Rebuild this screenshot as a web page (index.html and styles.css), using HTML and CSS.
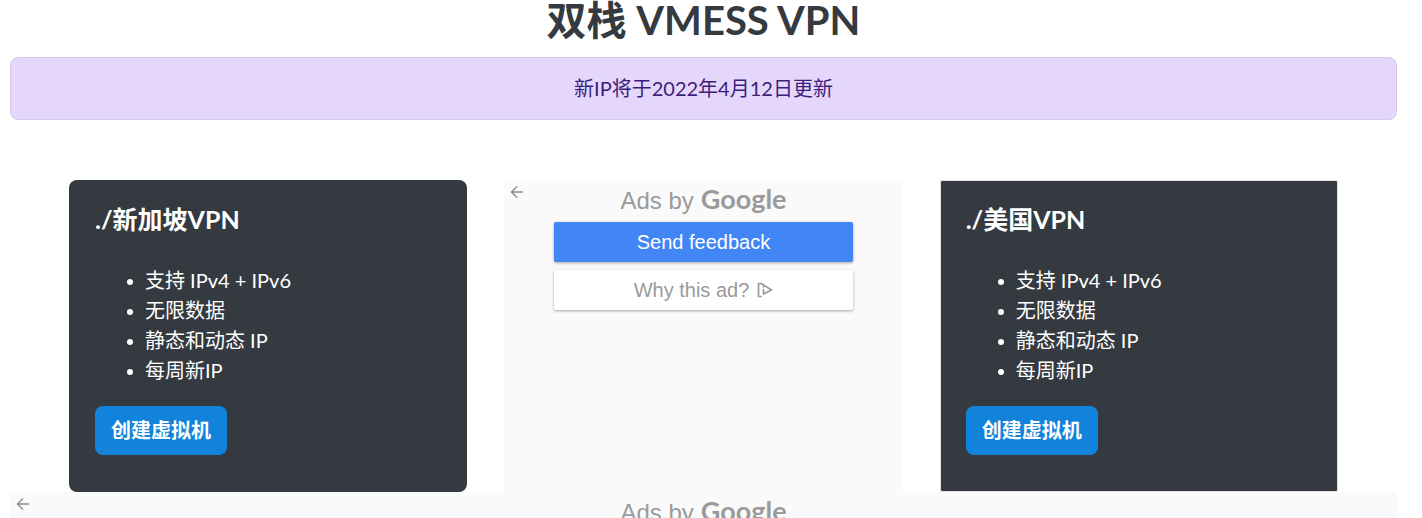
FILE: index.html
```html
<!DOCTYPE html>
<html lang="zh-CN">
<head>
<meta charset="utf-8">
<meta name="viewport" content="width=device-width, initial-scale=1">
<title>双栈 VMESS VPN</title>
<link rel="stylesheet" href="styles.css">
</head>
<body class="page">
<h1 class="title">双栈 VMESS VPN</h1>
<div class="notice" role="alert">新IP将于2022年4月12日更新</div>
<main class="plans">
  <section class="card">
    <h2 class="card-title">./新加坡VPN</h2>
    <ul class="features">
      <li>支持 IPv4 + IPv6</li>
      <li>无限数据</li>
      <li>静态和动态 IP</li>
      <li>每周新IP</li>
    </ul>
    <a class="create" href="#singapore">创建虚拟机</a>
  </section>
  <aside class="ad">
    <button class="back" type="button" aria-label="Back">
      <svg width="14" height="14" viewBox="0 0 14 14" fill="none" stroke="#8c8c8c" stroke-width="1.4"><path d="M13 7H2M7 1.500L1.500 7L7 12.500"/></svg>
    </button>
    <div class="ad-brand"><span>Ads by</span><span class="wordmark">Google</span></div>
    <div class="ad-actions">
      <button class="ad-button primary" type="button">Send feedback</button>
      <button class="ad-button" type="button">Why this ad?
        <svg width="16" height="16" viewBox="0 0 16 16" fill="none" stroke="#9a9a9a" stroke-width="1.700" stroke-linejoin="round" stroke-linecap="round"><path d="M4 14.500H1.500V1.500H4L14.500 8L6.500 12V7.500M6.500 4.500V5"/></svg>
      </button>
    </div>
  </aside>
  <section class="card square">
    <h2 class="card-title">./美国VPN</h2>
    <ul class="features">
      <li>支持 IPv4 + IPv6</li>
      <li>无限数据</li>
      <li>静态和动态 IP</li>
      <li>每周新IP</li>
    </ul>
    <a class="create" href="#usa">创建虚拟机</a>
  </section>
</main>
<aside class="ad banner">
  <button class="back" type="button" aria-label="Back">
    <svg width="14" height="14" viewBox="0 0 14 14" fill="none" stroke="#8c8c8c" stroke-width="1.4"><path d="M13 7H2M7 1.500L1.500 7L7 12.500"/></svg>
  </button>
  <div class="ad-brand"><span>Ads by</span><span class="wordmark">Google</span></div>
</aside>
</body>
</html>
```
FILE: styles.css
```css
* {
  box-sizing: border-box;
}

html {
  overflow: hidden;
}

.page {
  margin: 0;
  padding: 0 25px 0 10px;
  background: #fff;
  color: #343a40;
  font: 20px/30px Lato, "Noto Sans CJK SC", sans-serif;
}

.title {
  margin: 0;
  padding-bottom: 17px;
  font-size: 40px;
  line-height: 40px;
  font-weight: 700;
  text-align: center;
}

.notice {
  padding: 15px 15px 16px;
  border: 1px solid #d6caea;
  border-radius: 8px;
  background: #e5d7fb;
  color: #3d1d7a;
  text-align: center;
}

.plans {
  display: grid;
  grid-template-columns: repeat(3, 1fr);
  gap: 37px;
  margin-top: 60px;
  padding: 0 59px;
}

.card {
  padding: 24px 26px 37px;
  border-radius: 8px;
  background: #343a40;
  color: #fff;
}

.square {
  border: 1px solid #dfe0e1;
  border-radius: 2px;
  padding: 23px 25px 36px;
}

.card-title {
  margin: 0 0 31px;
  font-size: 25px;
  line-height: 30px;
  font-weight: 700;
}

.features {
  margin: 0 0 21px;
  padding-left: 32px;
  list-style: none;
}

.features li {
  display: flex;
  align-items: center;
  gap: 12px;
}

.features li::before {
  content: "";
  width: 6px;
  height: 6px;
  margin-top: 4px;
  border-radius: 50%;
  background: #fff;
}

.create {
  display: inline-block;
  padding: 9px 16px 10px;
  border-radius: 8px;
  background: #1283da;
  color: #fff;
  font-weight: 700;
  text-decoration: none;
  vertical-align: top;
}

.ad {
  position: relative;
  background: #fafafa;
  color: #9a9a9a;
  font-family: "Liberation Sans", Arial, sans-serif;
}

.back {
  position: absolute;
  top: 5px;
  left: 6px;
  display: flex;
  padding: 0;
  border: 0;
  background: none;
}

.ad-brand {
  display: flex;
  justify-content: center;
  align-items: baseline;
  gap: 7px;
  padding-top: 1px;
  font-size: 24px;
  line-height: 36px;
}

.wordmark {
  font-family: Lato, sans-serif;
  font-size: 27px;
  font-weight: 700;
}

.ad-actions {
  display: grid;
  gap: 8px;
  width: 75%;
  margin: 3px auto 0;
}

.ad-button {
  display: flex;
  justify-content: center;
  align-items: center;
  gap: 8px;
  height: 40px;
  padding: 0;
  border: 0;
  border-radius: 2px;
  background: #fff;
  color: #9a9a9a;
  font: 20px/24px "Liberation Sans", Arial, sans-serif;
  box-shadow: 0 1px 3px rgba(0, 0, 0, 0.35);
}

.primary {
  background: #4285f4;
  color: #fff;
}
```
